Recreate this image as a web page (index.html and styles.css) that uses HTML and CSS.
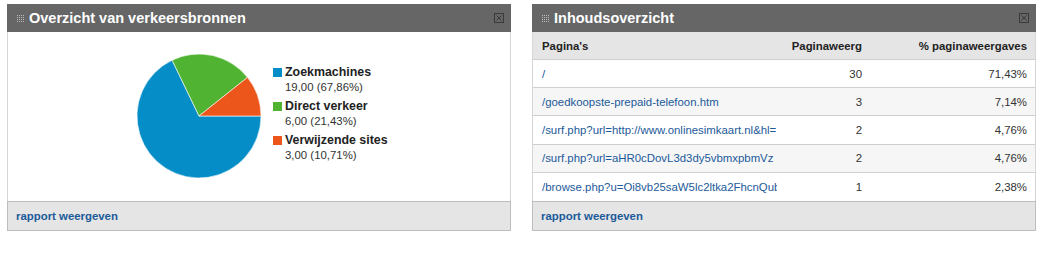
FILE: index.html
```html
<!DOCTYPE html>
<html>
<head>
<meta charset="utf-8">
<link rel="stylesheet" href="styles.css">
</head>
<body>
<div class="dashboard">
  <section class="panel">
    <header class="panel-head">
      <svg class="grip" width="7" height="7" viewBox="0 0 7 7"><g fill="#bdbdbd"><rect x="0" y="0" width="1" height="1"/><rect x="2" y="0" width="1" height="1"/><rect x="4" y="0" width="1" height="1"/><rect x="6" y="0" width="1" height="1"/><rect x="0" y="2" width="1" height="1"/><rect x="2" y="2" width="1" height="1"/><rect x="4" y="2" width="1" height="1"/><rect x="6" y="2" width="1" height="1"/><rect x="0" y="4" width="1" height="1"/><rect x="2" y="4" width="1" height="1"/><rect x="4" y="4" width="1" height="1"/><rect x="6" y="4" width="1" height="1"/><rect x="0" y="6" width="1" height="1"/><rect x="2" y="6" width="1" height="1"/><rect x="4" y="6" width="1" height="1"/><rect x="6" y="6" width="1" height="1"/></g></svg>
      <h2 class="panel-title">Overzicht van verkeersbronnen</h2>
      <svg class="close" width="10" height="10" viewBox="0 0 10 10"><rect x="0.5" y="0.5" width="9" height="9" fill="none" stroke="#3a3a3a"/><path d="M2.5 2.5 L7.5 7.5 M7.5 2.5 L2.5 7.5" stroke="#3a3a3a" stroke-width="1"/></svg>
    </header>
    <div class="panel-body chart-body">
      <svg class="pie" width="126" height="126" viewBox="0 0 126 126">
        <path d="M63,63 L36.10,7.14 A62,62 0 1 0 125,63 Z" fill="#058dc7" stroke="#fff" stroke-width="0.6"/>
        <path d="M63,63 L111.49,24.36 A62,62 0 0 0 36.10,7.14 Z" fill="#50b432" stroke="#fff" stroke-width="0.6"/>
        <path d="M63,63 L125,63 A62,62 0 0 0 111.49,24.36 Z" fill="#ed561b" stroke="#fff" stroke-width="0.6"/>
      </svg>
      <ul class="legend">
        <li class="legend-item"><span class="legend-name"><i class="swatch blue"></i>Zoekmachines</span><span class="legend-val">19,00 (67,86%)</span></li>
        <li class="legend-item"><span class="legend-name"><i class="swatch green"></i>Direct verkeer</span><span class="legend-val">6,00 (21,43%)</span></li>
        <li class="legend-item"><span class="legend-name"><i class="swatch orange"></i>Verwijzende sites</span><span class="legend-val">3,00 (10,71%)</span></li>
      </ul>
    </div>
    <footer class="panel-foot"><a class="report-link" href="#">rapport weergeven</a></footer>
  </section>

  <section class="panel">
    <header class="panel-head">
      <svg class="grip" width="7" height="7" viewBox="0 0 7 7"><g fill="#bdbdbd"><rect x="0" y="0" width="1" height="1"/><rect x="2" y="0" width="1" height="1"/><rect x="4" y="0" width="1" height="1"/><rect x="6" y="0" width="1" height="1"/><rect x="0" y="2" width="1" height="1"/><rect x="2" y="2" width="1" height="1"/><rect x="4" y="2" width="1" height="1"/><rect x="6" y="2" width="1" height="1"/><rect x="0" y="4" width="1" height="1"/><rect x="2" y="4" width="1" height="1"/><rect x="4" y="4" width="1" height="1"/><rect x="6" y="4" width="1" height="1"/><rect x="0" y="6" width="1" height="1"/><rect x="2" y="6" width="1" height="1"/><rect x="4" y="6" width="1" height="1"/><rect x="6" y="6" width="1" height="1"/></g></svg>
      <h2 class="panel-title">Inhoudsoverzicht</h2>
      <svg class="close" width="10" height="10" viewBox="0 0 10 10"><rect x="0.5" y="0.5" width="9" height="9" fill="none" stroke="#3a3a3a"/><path d="M2.5 2.5 L7.5 7.5 M7.5 2.5 L2.5 7.5" stroke="#3a3a3a" stroke-width="1"/></svg>
    </header>
    <div class="panel-body table-body">
      <div class="trow thead">
        <span class="c1">Pagina's</span><span class="c2">Paginaweerg</span><span class="c3">% paginaweergaves</span>
      </div>
      <div class="trow">
        <span class="c1"><a class="page-link" href="#">/</a></span><span class="c2">30</span><span class="c3">71,43%</span>
      </div>
      <div class="trow alt">
        <span class="c1"><a class="page-link" href="#">/goedkoopste-prepaid-telefoon.htm</a></span><span class="c2">3</span><span class="c3">7,14%</span>
      </div>
      <div class="trow">
        <span class="c1"><a class="page-link" href="#">/surf.php?url=http://www.onlinesimkaart.nl&amp;hl=</a></span><span class="c2">2</span><span class="c3">4,76%</span>
      </div>
      <div class="trow alt">
        <span class="c1"><a class="page-link" href="#">/surf.php?url=aHR0cDovL3d3dy5vbmxpbmVz</a></span><span class="c2">2</span><span class="c3">4,76%</span>
      </div>
      <div class="trow">
        <span class="c1"><a class="page-link" href="#">/browse.php?u=Oi8vb25saW5lc2ltka2FhcnQub</a></span><span class="c2">1</span><span class="c3">2,38%</span>
      </div>
    </div>
    <footer class="panel-foot"><a class="report-link" href="#">rapport weergeven</a></footer>
  </section>
</div>
</body>
</html>
```
FILE: styles.css
```css
* { box-sizing: border-box; }
html, body { margin: 0; padding: 0; background: #fff; }
body { font-family: "Liberation Sans", Arial, sans-serif; color: #333; }

.dashboard {
  display: flex;
  gap: 21px;
  padding: 4px 0 0 7px;
}

.panel {
  width: 504px;
  display: flex;
  flex-direction: column;
}

.panel-head {
  height: 28px;
  background: #666666;
  display: flex;
  align-items: center;
  padding: 0 7px 0 10px;
}
.grip { flex: none; margin-right: 5px; margin-top: 1px; }
.panel-title {
  margin: 0;
  flex: 1;
  font-size: 14.5px;
  font-weight: bold;
  color: #fff;
  line-height: 1;
}
.close { flex: none; margin-top: -1px; }

.panel-body {
  height: 169px;
  border-left: 1px solid #d6d6d6;
  border-right: 1px solid #d6d6d6;
  background: #fff;
}

.chart-body {
  display: flex;
  align-items: flex-start;
  padding: 21px 0 0 128px;
}
.pie { flex: none; margin-right: 11px; }
.legend {
  list-style: none;
  margin: 0;
  padding: 12px 0 0 0;
  display: flex;
  flex-direction: column;
  gap: 4px;
}
.legend-item { display: flex; flex-direction: column; }
.legend-name {
  display: flex;
  align-items: center;
  font-size: 12.4px;
  font-weight: bold;
  color: #222;
  line-height: 15px;
}
.swatch { width: 9px; height: 9px; margin-right: 3px; display: inline-block; }
.swatch.blue { background: #058dc7; }
.swatch.green { background: #50b432; }
.swatch.orange { background: #ed561b; }
.legend-val { font-size: 11.4px; color: #333; line-height: 15px; padding-left: 12px; }

.table-body {
  display: grid;
  grid-template-rows: 28px repeat(5, 1fr);
}
.trow {
  display: grid;
  grid-template-columns: 244px 85px 1fr;
  align-items: center;
  border-bottom: 1px solid #cfcfcf;
  font-size: 11.4px;
  background: #fff;
}
.trow:last-child { border-bottom: none; }
.trow.alt { background: #f6f6f6; }
.trow.thead { background: #e5e5e5; font-weight: bold; color: #222; }
.c1 {
  padding-left: 9px;
  white-space: nowrap;
  overflow: hidden;
  min-width: 0;
}
.page-link {
  color: #1c5a9a;
  text-decoration: none;
}
.c2 { text-align: right; }
.c3 { text-align: right; padding-right: 8px; }

.panel-foot {
  height: 30px;
  background: #e5e5e5;
  border: 1px solid #bdbdbd;
  display: flex;
  align-items: center;
  padding-left: 8px;
}
.report-link {
  font-size: 11.4px;
  font-weight: bold;
  color: #1c5a9a;
  text-decoration: none;
}
```
